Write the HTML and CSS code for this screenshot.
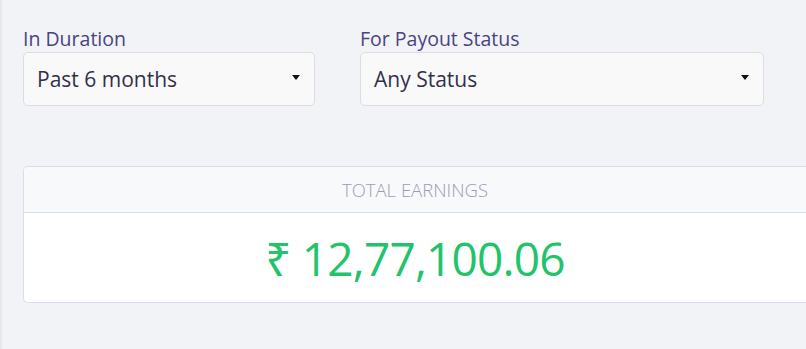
FILE: index.html
```html
<!DOCTYPE html>
<html>
<head>
<meta charset="utf-8">
<link rel="stylesheet" href="styles.css">
</head>
<body>
<div class="page">
  <div class="filters">
    <div class="field field-duration">
      <label class="label">In Duration</label>
      <div class="select"><span>Past 6 months</span><span class="caret"></span></div>
    </div>
    <div class="field field-status">
      <label class="label">For Payout Status</label>
      <div class="select"><span>Any Status</span><span class="caret"></span></div>
    </div>
  </div>
  <div class="card">
    <div class="card-head">TOTAL EARNINGS</div>
    <div class="card-body"><span class="amount">₹ 12,77,100.06</span></div>
  </div>
</div>
</body>
</html>
```

FILE: styles.css
```css
html, body {
  margin: 0;
  padding: 0;
}
body {
  background: #f2f3f7;
  font-family: "Open Sans", "Noto Sans", sans-serif;
  width: 806px;
  height: 349px;
  overflow: hidden;
}
.page {
  border-left: 2px solid #e7e8ee;
  height: 349px;
  box-sizing: border-box;
  padding: 26px 0 0 21px;
}
.filters {
  display: flex;
  gap: 45px;
}
.field {
  display: flex;
  flex-direction: column;
}
.field-duration { width: 292px; }
.field-status { width: 404px; }
.label {
  font-size: 19.5px;
  line-height: 25px;
  color: #4a4382;
  margin-bottom: 1px;
}
.select {
  height: 54px;
  box-sizing: border-box;
  border: 1px solid #dcdde3;
  border-radius: 5px;
  background: #f9f9fa;
  display: flex;
  align-items: center;
  justify-content: space-between;
  padding: 0 14px 0 13px;
  font-size: 21px;
  color: #333048;
}
.caret {
  width: 0;
  height: 0;
  border-left: 4px solid transparent;
  border-right: 4px solid transparent;
  border-top: 5px solid #111;
  margin-top: -3px;
}
.card {
  margin-top: 60px;
  border: 1px solid #d7def0;
  border-right: none;
  border-radius: 5px 0 0 5px;
  background: #fff;
  overflow: hidden;
}
.card-head {
  height: 45px;
  background: #f8f9fb;
  border-bottom: 1px solid #d7def0;
  display: flex;
  align-items: center;
  justify-content: center;
  font-size: 18.5px;
  font-weight: 300;
  color: #9a9db2;
}
.card-body {
  height: 89px;
  display: flex;
  align-items: center;
  justify-content: center;
}
.amount {
  font-size: 46px;
  letter-spacing: -0.8px;
  color: #22c36b;
}
```
